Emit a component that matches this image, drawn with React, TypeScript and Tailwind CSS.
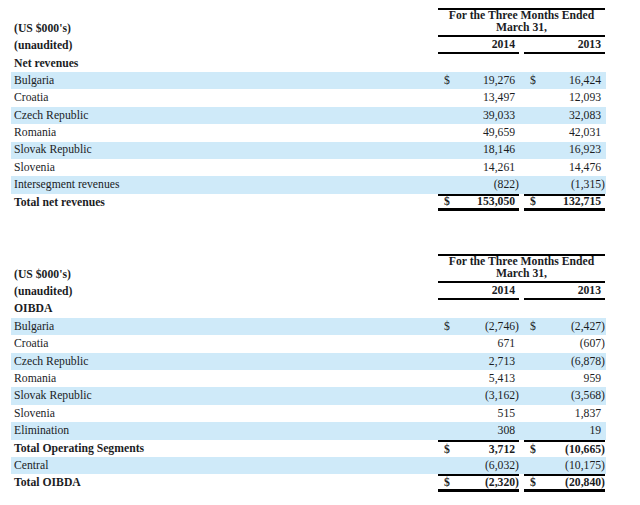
type Row = {
  label: string;
  a: string;
  b: string;
  dollar?: boolean;
  shaded?: boolean;
  bold?: boolean;
  lineTop?: boolean;
  lineBottom?: boolean;
};

const revenues: Row[] = [
  { label: "Bulgaria", a: "19,276", b: "16,424", dollar: true, shaded: true },
  { label: "Croatia", a: "13,497", b: "12,093" },
  { label: "Czech Republic", a: "39,033", b: "32,083", shaded: true },
  { label: "Romania", a: "49,659", b: "42,031" },
  { label: "Slovak Republic", a: "18,146", b: "16,923", shaded: true },
  { label: "Slovenia", a: "14,261", b: "14,476" },
  { label: "Intersegment revenues", a: "(822)", b: "(1,315)", shaded: true },
  {
    label: "Total net revenues",
    a: "153,050",
    b: "132,715",
    dollar: true,
    bold: true,
    lineTop: true,
    lineBottom: true,
  },
];

const oibda: Row[] = [
  { label: "Bulgaria", a: "(2,746)", b: "(2,427)", dollar: true, shaded: true },
  { label: "Croatia", a: "671", b: "(607)" },
  { label: "Czech Republic", a: "2,713", b: "(6,878)", shaded: true },
  { label: "Romania", a: "5,413", b: "959" },
  { label: "Slovak Republic", a: "(3,162)", b: "(3,568)", shaded: true },
  { label: "Slovenia", a: "515", b: "1,837" },
  { label: "Elimination", a: "308", b: "19", shaded: true },
  {
    label: "Total Operating Segments",
    a: "3,712",
    b: "(10,665)",
    dollar: true,
    bold: true,
    lineTop: true,
  },
  { label: "Central", a: "(6,032)", b: "(10,175)", shaded: true },
  {
    label: "Total OIBDA",
    a: "(2,320)",
    b: "(20,840)",
    dollar: true,
    bold: true,
    lineTop: true,
    lineBottom: true,
  },
];

const Num = ({ value, dollar, row }: { value: string; dollar?: boolean; row: Row }) => {
  const neg = value.endsWith(")");
  return (
    <div
      className={`flex h-full w-[81px] items-center justify-between pl-[6px] ${
        row.lineTop ? "border-t-2 border-black" : ""
      } ${row.lineBottom ? "border-b-[3px] border-black" : ""}`}
    >
      <span>{dollar ? "$" : ""}</span>
      <span>
        {value}
        {!neg && <span className="invisible">)</span>}
      </span>
    </div>
  );
};

const Table = ({ title, rows }: { title: string; rows: Row[] }) => {
  return (
    <div className="flex flex-col">
      <div className="flex h-[64px]">
        <div className="flex w-[427px] flex-col justify-end pl-[3px] font-bold">
          <div className="flex h-[17.4px] items-center">(US $000's)</div>
          <div className="flex h-[17.4px] items-center">(unaudited)</div>
          <div className="flex h-[17.4px] items-center">{title}</div>
        </div>
        <div className="flex w-[167px] flex-col font-bold">
          <div className="h-[2px] bg-black" />
          <div className="flex h-[25px] flex-col items-center leading-[12px]">
            <span>For the Three Months Ended</span>
            <span>March 31,</span>
          </div>
          <div className="h-[2px] bg-black" />
          <div className="flex h-[17px] gap-[5px]">
            <div className="flex w-[81px] items-center justify-end border-b-2 border-black pr-[4px]">
              2014
            </div>
            <div className="flex w-[81px] items-center justify-end border-b-2 border-black pr-[4px]">
              2013
            </div>
          </div>
        </div>
      </div>
      {rows.map((row) => (
        <div
          key={row.label}
          className={`flex h-[17.4px] w-[595px] ${row.shaded ? "bg-[#cfeaf9]" : ""} ${
            row.bold ? "font-bold" : ""
          }`}
        >
          <div className="flex w-[427px] items-center pl-[3px]">{row.label}</div>
          <Num value={row.a} dollar={row.dollar} row={row} />
          <div className="w-[5px]" />
          <Num value={row.b} dollar={row.dollar} row={row} />
        </div>
      ))}
    </div>
  );
};

export default function App() {
  return (
    <div
      className="h-[505px] w-[640px] bg-white pl-[11px] pt-[8px] text-[11.7px] text-[#1b1d1f]"
      style={{ fontFamily: '"Liberation Serif", "Times New Roman", serif' }}
    >
      <Table title="Net revenues" rows={revenues} />
      <div className="h-[42.8px]" />
      <Table title="OIBDA" rows={oibda} />
    </div>
  );
}
